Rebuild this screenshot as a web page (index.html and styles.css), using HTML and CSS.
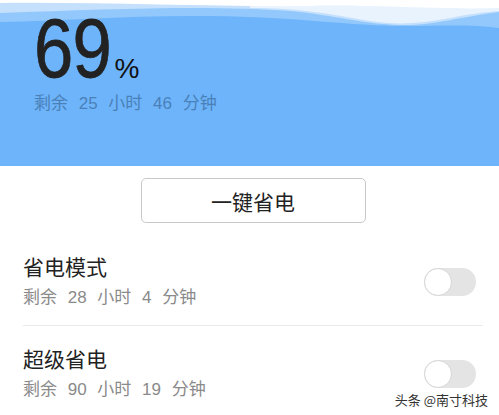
FILE: index.html
```html
<!DOCTYPE html>
<html lang="zh-CN">
<head>
    <meta charset="UTF-8">
    <meta name="viewport" content="width=device-width, initial-scale=1.0">
    <title>省电</title>
    <link rel="stylesheet" href="styles.css">
</head>
<body>
    <!-- Battery header -->
    <div class="battery-header">
        <svg class="wave" viewBox="0 0 499 32" preserveAspectRatio="none">
            <path d="M0,0 H499 V28 C470,24 440,26 405,26 C350,26 300,17 210,16 C130,15 60,21 0,22 Z" fill="#93c8fc"/>
            <path d="M0,0 H499 V12 C460,17 435,25 405,25 C365,25 335,15 290,11 C210,5 110,9 0,13 Z" fill="#c4e0fd"/>
            <path d="M250,8 C300,8 330,14 370,21 C395,25 420,24 450,18 C470,14 485,12 499,11 V6 H250 Z" fill="#e8f3fe"/>
            <path d="M0,0 H499 V8 C440,10 390,5 310,6 C210,7 110,2 0,3 Z" fill="#ffffff"/>
        </svg>
        <div class="level"><span class="level-num">69</span><span class="level-unit">%</span></div>
        <div class="remain">剩余 25 小时 46 分钟</div>
    </div>

    <!-- One key button -->
    <div class="action">
        <button class="save-btn">一键省电</button>
    </div>

    <!-- Modes -->
    <div class="mode-list">
        <div class="mode-row">
            <div class="mode-text">
                <div class="mode-title">省电模式</div>
                <div class="mode-sub">剩余 28 小时 4 分钟</div>
            </div>
            <span class="switch"><span class="knob"></span></span>
        </div>
        <div class="mode-row">
            <div class="mode-text">
                <div class="mode-title">超级省电</div>
                <div class="mode-sub">剩余 90 小时 19 分钟</div>
            </div>
            <span class="switch"><span class="knob"></span></span>
        </div>
    </div>

    <div class="watermark">头条 @南寸科技</div>
</body>
</html>
```

FILE: styles.css
```css
body {
    margin: 0;
    padding: 0;
    width: 499px;
    height: 415px;
    overflow: hidden;
    position: relative;
    background-color: #fff;
    font-family: "Liberation Sans", "Noto Sans CJK SC", sans-serif;
    color: #222;
}

.battery-header {
    position: relative;
    height: 166px;
    box-sizing: border-box;
    padding: 5px 0 0 34px;
    background-color: #6db4fb;
}

.wave {
    position: absolute;
    left: 0;
    top: 0;
    width: 499px;
    height: 32px;
}

.level {
    position: relative;
    line-height: 86px;
    height: 86px;
}

.level-num {
    display: inline-block;
    font-size: 84px;
    color: #222;
    letter-spacing: -1px;
    transform: scaleX(0.84);
    transform-origin: left center;
    margin-right: -14px;
    -webkit-text-stroke: 0.8px #222;
}

.level-unit {
    font-size: 28px;
    color: #111;
    margin-left: 3px;
    vertical-align: -1px;
}

.remain {
    margin-top: 2px;
    font-size: 17px;
    line-height: 22px;
    word-spacing: 6px;
    color: #4a80b8;
}

.action {
    display: flex;
    justify-content: center;
    padding-top: 12px;
}

.save-btn {
    width: 225px;
    height: 45px;
    margin-left: 7px;
    background: #fff;
    border: 1px solid #c9c9c9;
    border-radius: 5px;
    font-family: "Noto Sans CJK SC", sans-serif;
    font-size: 21px;
    color: #222;
    padding: 0;
}

.mode-list {
    margin: 11px 16px 0 23px;
}

.mode-row {
    display: flex;
    align-items: center;
    justify-content: space-between;
    padding: 20px 7px 16px 0;
}

.mode-row + .mode-row {
    border-top: 1px solid #ebebeb;
}

.mode-title {
    font-size: 21px;
    line-height: 28px;
    color: #222;
}

.mode-sub {
    margin-top: 5px;
    font-size: 17px;
    line-height: 22px;
    word-spacing: 6px;
    color: #8a8a8a;
}

.switch {
    display: inline-block;
    width: 52px;
    height: 28px;
    border-radius: 14px;
    background-color: #e4e4e4;
}

.knob {
    display: block;
    width: 26px;
    height: 26px;
    border-radius: 50%;
    background-color: #fff;
    border: 1px solid #d6d6d6;
}

.watermark {
    position: absolute;
    right: 11px;
    bottom: 7px;
    font-family: "Noto Sans CJK SC", sans-serif;
    font-size: 13px;
    line-height: 17px;
    color: #333;
    text-shadow: 0 0 2px #fff, 0 0 2px #fff, 0 0 2px #fff;
}
```
